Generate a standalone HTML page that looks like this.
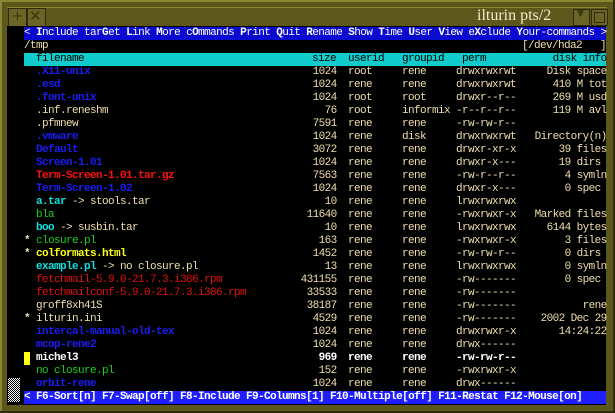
<!DOCTYPE html>
<html><head><meta charset="utf-8">
<style>
*{margin:0;padding:0}
html,body{width:615px;height:413px;overflow:hidden;background:#5c581c}
#frame{position:absolute;left:0;top:0;width:615px;height:413px;background:#5c581c}
.hl{position:absolute;background:#8c8634}
.dk{position:absolute;background:#2e2c0c}
#term{position:absolute;left:7px;top:26px;width:599px;height:379px;background:#000}
.row{position:absolute;left:0;height:13px;width:615px;font:11px/13px "Liberation Mono",monospace;letter-spacing:-0.6px;color:#f0dfae;white-space:pre}
.row span{position:absolute;top:0;white-space:pre}
.b{font-weight:bold}
.blue{color:#1c1cf4;font-weight:bold}
.red{color:#ff1010;font-weight:bold}
.rred{color:#e01010}
.grn{color:#18d018}
.cy{color:#10e0e0;font-weight:bold}
.yel{color:#ffff10;font-weight:bold}
.wh{color:#fff;font-weight:bold}
.sz{left:276px;width:60.6px;text-align:right}
.u{left:348px}.g{left:402px}.p{left:456px}
.inf{left:456px;width:150.6px;text-align:right}
.nm{left:36px}.mk{left:24px}
</style></head><body>
<div id="frame">
 <div class="hl" style="left:0;top:0;width:615px;height:2px"></div>
 <div class="hl" style="left:0;top:0;width:2px;height:413px"></div>
 <div class="dk" style="left:0;top:411px;width:615px;height:2px"></div>
 <div class="dk" style="left:613px;top:0;width:2px;height:413px"></div>
 <div class="hl" style="left:7px;top:7px;width:600px;height:1px"></div>
 <div style="position:absolute;left:8px;top:8px;width:17px;height:17px;background:#6a6426;border:1px solid #2e2c0c"></div>
 <div style="position:absolute;left:12px;top:9px;font:13px 'DejaVu Sans';color:#3a380f">+</div>
 <div style="position:absolute;left:27px;top:8px;width:17px;height:17px;background:#6a6426;border:1px solid #2e2c0c"></div>
 <div style="position:absolute;left:29px;top:7px;font:bold 15px 'DejaVu Sans';color:#3a380f">✕</div>
 <div style="position:absolute;left:477px;top:7px;font:16px 'Liberation Serif',serif;color:#f4eccc">ilturin pts/2</div>
 <div style="position:absolute;left:573px;top:9px;width:15px;height:15px;background:#6a6426;border:1px solid #2e2c0c"></div>
 <div style="position:absolute;left:577px;top:9px;font:9px 'DejaVu Sans';color:#3a380f">▼</div>
 <div style="position:absolute;left:591px;top:9px;width:15px;height:15px;background:#6a6426;border:1px solid #2e2c0c"></div>
 <div style="position:absolute;left:594px;top:12px;width:9px;height:9px;border:1px solid #2e2c0c"></div>
 <div id="term"></div>
 <div style="position:absolute;left:8px;top:378px;width:12px;height:24px;background:repeating-conic-gradient(#fff 0 25%,#000 0 50%) 0 0/2px 2px"></div>
</div>

<div class="row" style="top:27px;left:24px;width:582px;background:#0a0ad0;color:#fff">&lt; <b>I</b>nclude tar<b>G</b>et <b>L</b>ink <b>M</b>ore c<b>O</b>mmands <b>P</b>rint <b>Q</b>uit <b>R</b>ename <b>S</b>how <b>T</b>ime <b>U</b>ser <b>V</b>iew e<b>X</b>clude <b>Y</b>our-commands &gt;</div>
<div class="row" style="top:40px"><span class="mk">/tmp</span><span style="left:522px">[/dev/hda2   ]</span></div>
<div class="row" style="top:53px"><div style="position:absolute;left:24px;width:582px;height:13px;background:#10cccc"></div><span class="nm" style="color:#000">filename</span><span style="left:312px;color:#000">size</span><span class="u" style="color:#000">userid</span><span class="g" style="color:#000">groupid</span><span style="left:462px;color:#000">perm</span><span class="inf" style="color:#000">disk info</span></div>

<div class="row" style="top:66px"><span class="nm blue">.X11-unix</span><span class="sz">1024</span><span class="u">root</span><span class="g">rene</span><span class="p">drwxrwxrwt</span><span class="inf">Disk space</span></div>
<div class="row" style="top:79px"><span class="nm blue">.esd</span><span class="sz">1024</span><span class="u">rene</span><span class="g">rene</span><span class="p">drwxrwxrwt</span><span class="inf">410 M tot</span></div>
<div class="row" style="top:92px"><span class="nm blue">.font-unix</span><span class="sz">1024</span><span class="u">root</span><span class="g">root</span><span class="p">drwxr--r--</span><span class="inf">269 M usd</span></div>
<div class="row" style="top:105px"><span class="nm">.inf.reneshm</span><span class="sz">76</span><span class="u">root</span><span class="g">informix</span><span class="p">-r--r--r--</span><span class="inf">119 M avl</span></div>
<div class="row" style="top:118px"><span class="nm">.pfmnew</span><span class="sz">7591</span><span class="u">rene</span><span class="g">rene</span><span class="p">-rw-rw-r--</span></div>
<div class="row" style="top:131px"><span class="nm blue">.vmware</span><span class="sz">1024</span><span class="u">rene</span><span class="g">disk</span><span class="p">drwxrwxrwt</span><span class="inf">Directory(n)</span></div>
<div class="row" style="top:144px"><span class="nm blue">Default</span><span class="sz">3072</span><span class="u">rene</span><span class="g">rene</span><span class="p">drwxr-xr-x</span><span class="inf">39 files</span></div>
<div class="row" style="top:157px"><span class="nm blue">Screen-1.01</span><span class="sz">1024</span><span class="u">rene</span><span class="g">rene</span><span class="p">drwxr-x---</span><span class="inf">19 dirs </span></div>
<div class="row" style="top:170px"><span class="nm red">Term-Screen-1.01.tar.gz</span><span class="sz">7563</span><span class="u">rene</span><span class="g">rene</span><span class="p">-rw-r--r--</span><span class="inf">4 symln</span></div>
<div class="row" style="top:183px"><span class="nm blue">Term-Screen-1.02</span><span class="sz">1024</span><span class="u">rene</span><span class="g">rene</span><span class="p">drwxr-x---</span><span class="inf">0 spec </span></div>
<div class="row" style="top:196px"><span class="nm"><b class="cy">a.tar</b> -&gt; stools.tar</span><span class="sz">10</span><span class="u">rene</span><span class="g">rene</span><span class="p">lrwxrwxrwx</span></div>
<div class="row" style="top:209px"><span class="nm grn">bla</span><span class="sz">11640</span><span class="u">rene</span><span class="g">rene</span><span class="p">-rwxrwxr-x</span><span class="inf">Marked files</span></div>
<div class="row" style="top:222px"><span class="nm"><b class="cy">boo</b> -&gt; susbin.tar</span><span class="sz">10</span><span class="u">rene</span><span class="g">rene</span><span class="p">lrwxrwxrwx</span><span class="inf">6144 bytes</span></div>
<div class="row" style="top:235px"><span class="mk b">*</span><span class="nm grn">closure.pl</span><span class="sz">163</span><span class="u">rene</span><span class="g">rene</span><span class="p">-rwxrwxr-x</span><span class="inf">3 files</span></div>
<div class="row" style="top:248px"><span class="mk b">*</span><span class="nm yel">colformats.html</span><span class="sz">1452</span><span class="u">rene</span><span class="g">rene</span><span class="p">-rw-rw-r--</span><span class="inf">0 dirs </span></div>
<div class="row" style="top:261px"><span class="nm"><b class="cy">example.pl</b> -&gt; no closure.pl</span><span class="sz">13</span><span class="u">rene</span><span class="g">rene</span><span class="p">lrwxrwxrwx</span><span class="inf">0 symln</span></div>
<div class="row" style="top:274px"><span class="nm rred">fetchmail-5.9.0-21.7.3.i386.rpm</span><span class="sz">431155</span><span class="u">rene</span><span class="g">rene</span><span class="p">-rw-------</span><span class="inf">0 spec </span></div>
<div class="row" style="top:287px"><span class="nm rred">fetchmailconf-5.9.0-21.7.3.i386.rpm</span><span class="sz">33533</span><span class="u">rene</span><span class="g">rene</span><span class="p">-rw-------</span></div>
<div class="row" style="top:300px"><span class="nm">groff8xh41S</span><span class="sz">38187</span><span class="u">rene</span><span class="g">rene</span><span class="p">-rw-------</span><span class="inf">rene</span></div>
<div class="row" style="top:313px"><span class="mk b">*</span><span class="nm">ilturin.ini</span><span class="sz">4529</span><span class="u">rene</span><span class="g">rene</span><span class="p">-rw-------</span><span class="inf">2002 Dec 29</span></div>
<div class="row" style="top:326px"><span class="nm blue">intercal-manual-old-tex</span><span class="sz">1024</span><span class="u">rene</span><span class="g">rene</span><span class="p">drwxrwxr-x</span><span class="inf">14:24:22</span></div>
<div class="row" style="top:339px"><span class="nm blue">mcop-rene2</span><span class="sz">1024</span><span class="u">rene</span><span class="g">rene</span><span class="p">drwx------</span></div>
<div class="row" style="top:352px"><div style="position:absolute;left:24px;top:0;width:6px;height:13px;background:#ffff10"></div><span class="nm wh">michel3</span><span class="sz wh">969</span><span class="u wh">rene</span><span class="g wh">rene</span><span class="p wh">-rw-rw-r--</span></div>
<div class="row" style="top:365px"><span class="nm grn">no closure.pl</span><span class="sz">152</span><span class="u">rene</span><span class="g">rene</span><span class="p">-rwxrwxr-x</span></div>
<div class="row" style="top:378px"><span class="nm blue">orbit-rene</span><span class="sz">1024</span><span class="u">rene</span><span class="g">rene</span><span class="p">drwx------</span></div>
<div class="row" style="top:391px;left:24px;width:582px;background:#1e1eff;color:#fff;font-weight:bold">&lt; F6-Sort[n] F7-Swap[off] F8-Include F9-Columns[1] F10-Multiple[off] F11-Restat F12-Mouse[on]</div>
</body></html>
